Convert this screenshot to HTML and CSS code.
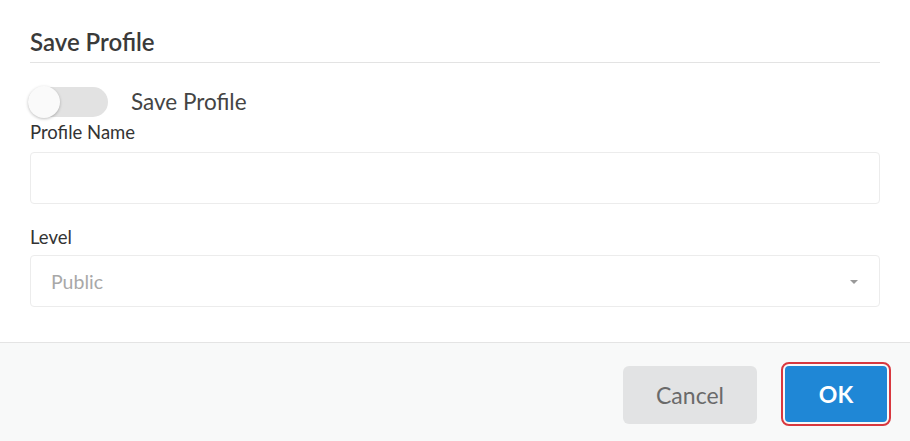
FILE: index.html
```html
<!DOCTYPE html>
<html>
<head>
<meta charset="utf-8">
<link rel="stylesheet" href="styles.css">
</head>
<body>
<div class="dialog">
  <div class="body">
    <div class="header"><h2 class="title">Save Profile</h2></div>
    <div class="toggle-row">
      <span class="switch"><span class="knob"></span></span>
      <span class="toggle-label">Save Profile</span>
    </div>
    <label class="field-label first">Profile Name</label>
    <div class="input"></div>
    <label class="field-label">Level</label>
    <div class="input select">
      <span class="placeholder">Public</span>
      <span class="caret"></span>
    </div>
  </div>
  <div class="footer">
    <button class="btn cancel">Cancel</button>
    <button class="btn ok">OK</button>
  </div>
</div>
</body>
</html>
```
FILE: styles.css
```css
html, body {
  margin: 0;
  padding: 0;
  background: #ffffff;
  font-family: Lato, "Open Sans", sans-serif;
}
.dialog {
  width: 910px;
  height: 441px;
  display: flex;
  flex-direction: column;
}
.body {
  padding: 30px 30px 35px 30px;
  display: flex;
  flex-direction: column;
}
.header {
  border-bottom: 1px solid #e3e3e3;
  padding-bottom: 8px;
}
.title {
  margin: 0;
  font-size: 24px;
  line-height: 24px;
  font-weight: 600;
  color: #3a3a3a;
}
.toggle-row {
  margin-top: 24px;
  height: 30px;
  display: flex;
  align-items: center;
}
.switch {
  position: relative;
  width: 80px;
  height: 30px;
  border-radius: 15px;
  background: #e2e2e2;
  margin-left: -2px;
}
.knob {
  position: absolute;
  left: 0;
  top: -1px;
  width: 32px;
  height: 32px;
  border-radius: 50%;
  background: #fafafa;
  box-shadow: 0 1px 3px rgba(0,0,0,0.25);
}
.toggle-label {
  margin-left: 23px;
  font-size: 22.5px;
  line-height: 30px;
  color: #444;
}
.field-label {
  display: block;
  font-size: 18.5px;
  line-height: 18px;
  color: #333;
  margin-top: 24px;
  margin-bottom: 9px;
}
.field-label.first {
  margin-top: 6px;
  margin-bottom: 11px;
}
.input {
  height: 50px;
  border: 1px solid #ececec;
  border-radius: 4px;
  background: #fff;
}
.select {
  display: flex;
  align-items: center;
  justify-content: space-between;
  padding: 0 21px 0 20px;
}
.placeholder {
  font-size: 19.5px;
  color: #a8a8a8;
}
.caret {
  width: 0;
  height: 0;
  border-left: 4px solid transparent;
  border-right: 4px solid transparent;
  border-top: 4px solid #999;
  margin-top: 2px;
}
.footer {
  flex: 1;
  border-top: 1px solid #e4e4e4;
  background: #f8f9f9;
  display: flex;
  justify-content: flex-end;
  align-items: flex-start;
  padding: 23px 23px 0 0;
  gap: 28px;
}
.btn {
  font-family: Lato, "Open Sans", sans-serif;
  font-size: 23px;
  border: none;
  cursor: pointer;
}
.cancel {
  width: 134px;
  height: 58px;
  border-radius: 6px;
  background: #e2e3e4;
  color: #6a6a6a;
}
.ok {
  width: 102px;
  height: 56px;
  border-radius: 4px;
  background: #1f87d6;
  color: #fff;
  font-weight: 700;
  outline: 2px solid #d8383f;
  outline-offset: 2px;
}
```
